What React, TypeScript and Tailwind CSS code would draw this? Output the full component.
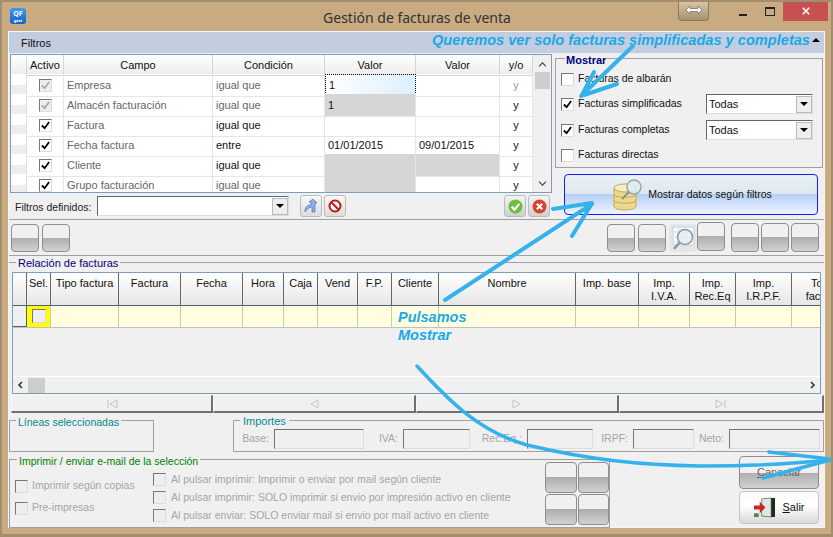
import type { ReactNode } from "react";

const filterRows = [
  { campo: "Empresa", cond: "igual que", v1: "1", v2: "", locked: true, focus: true },
  { campo: "Almacén facturación", cond: "igual que", v1: "1", v2: "", locked: true, grey1: true },
  { campo: "Factura", cond: "igual que", v1: "", v2: "" },
  { campo: "Fecha factura", cond: "entre", v1: "01/01/2015", v2: "09/01/2015" },
  { campo: "Cliente", cond: "igual que", v1: "", v2: "", grey1: true, grey2: true },
  { campo: "Grupo facturación", cond: "igual que", v1: "", v2: "", grey1: true, soft: true },
];

const relCols = [
  { w: "w-[24px]", t: "Sel." },
  { w: "w-[68px]", t: "Tipo factura" },
  { w: "w-[62px]", t: "Factura" },
  { w: "w-[62px]", t: "Fecha" },
  { w: "w-[41px]", t: "Hora" },
  { w: "w-[34px]", t: "Caja" },
  { w: "w-[40px]", t: "Vend" },
  { w: "w-[34px]", t: "F.P." },
  { w: "w-[47px]", t: "Cliente" },
  { w: "w-[137px]", t: "Nombre" },
  { w: "w-[63px]", t: "Imp. base" },
  { w: "w-[51px]", t: "Imp.\nI.V.A." },
  { w: "w-[46px]", t: "Imp.\nRec.Eq" },
  { w: "w-[56px]", t: "Imp.\nI.R.P.F." },
  { w: "w-[62px]", t: "Total\nfactura" },
];

function Check({ on, dim, className = "" }: { on?: boolean; dim?: boolean; className?: string }) {
  return (
    <span
      className={`flex h-[13px] w-[13px] shrink-0 items-center justify-center border border-t-[#777] border-l-[#777] border-r-[#ddd] border-b-[#ddd] ${dim ? "bg-[#eeeeee]" : "bg-white"} ${className}`}
    >
      {on && (
        <svg viewBox="0 0 10 10" className="h-[9px] w-[9px]">
          <path d="M1 5l3 3 5-7" fill="none" stroke={dim ? "#aaa" : "#000"} strokeWidth="2" />
        </svg>
      )}
    </span>
  );
}

function Glass({ className = "", children }: { className?: string; children?: ReactNode }) {
  return (
    <div
      className={`flex items-center justify-center rounded-[4px] border border-[#8e8e8e] bg-[linear-gradient(#f0f0f0_0%,#f0f0f0_50%,#aeaeae_50%,#d2d2d2_100%)] ${className}`}
    >
      {children}
    </div>
  );
}

function Combo({ className = "", text }: { className?: string; text?: string }) {
  return (
    <div className={`flex h-[20px] items-center border border-t-[#666] border-l-[#666] border-r-[#ddd] border-b-[#ddd] bg-white pl-[2px] ${className}`}>
      <span className="flex-1">{text}</span>
      <span className="flex h-[17px] w-[16px] items-center justify-center border border-[#bbb] bg-[#eeeeee]">
        <span className="h-0 w-0 border-x-[4px] border-t-[4px] border-x-transparent border-t-black" />
      </span>
    </div>
  );
}

function Field({ label }: { label: string }) {
  return (
    <>
      <span className="pr-[5px] text-right text-[#a5a5a5]">{label}</span>
      <span className="h-[20px] border border-t-[#777] border-l-[#777] border-r-[#ddd] border-b-[#ddd]" />
    </>
  );
}

function NavIcon({ d }: { d: string }) {
  return (
    <svg viewBox="0 0 12 10" className="h-[10px] w-[12px]">
      <path d={d} fill="none" stroke="#c4c4c4" />
    </svg>
  );
}

export default function App() {
  return (
    <div
      className="relative flex h-[537px] w-[833px] flex-col overflow-hidden border-2 border-b-[3px] border-[#a08e6e] bg-[#c8ab80] text-[11px] text-[#111]"
      style={{ fontFamily: '"Liberation Sans", sans-serif' }}
    >
      {/* title bar */}
      <div className="relative flex h-[29px] shrink-0 items-center justify-center pt-[2px] text-[14px] text-[#333]" style={{ fontFamily: '"Noto Sans", sans-serif' }}>
        <div className="absolute left-[8px] top-[6px] flex h-[16px] w-[16px] flex-col items-center justify-center rounded-[3px] bg-[linear-gradient(#3f9bf0,#1261c4)] text-[7px] font-bold leading-[9px] text-white">
          <span>QF</span>
          <span className="text-[4px] leading-[6px]">gest</span>
        </div>
        <span className="ml-[1px]">Gestión de facturas de venta</span>
        <div className="absolute right-[3px] top-[-2px] flex items-start">
          <div className="flex h-[21px] w-[31px] items-center justify-center rounded-b-[4px] border border-t-0 border-[#8b7a5c] bg-[linear-gradient(#dcc9a8,#a8936f)]">
            <svg viewBox="0 0 18 10" className="h-[10px] w-[18px]">
              <path d="M1 5l4-4v2.500h8V1l4 4-4 4V6.500H5V9z" fill="#fff" stroke="#555" strokeWidth="0.600" />
            </svg>
          </div>
          <div className="ml-[30px] mt-[14px] h-[2px] w-[8px] bg-[#222]" />
          <div className="ml-[18px] mt-[7px] h-[9px] w-[10px] border border-t-2 border-[#222]" />
          <div className="ml-[8px] mt-[1px] flex h-[20px] w-[45px] items-center justify-center bg-[#c75050]">
            <svg viewBox="0 0 10 10" className="h-[8px] w-[8px]">
              <path d="M1 1l8 8M9 1l-8 8" stroke="#fff" strokeWidth="2" />
            </svg>
          </div>
        </div>
      </div>

      {/* window body */}
      <div className="mx-[6px] flex h-[497px] w-[817px] shrink-0 flex-col border border-[#f6f6f6] bg-[#f0f0f0]">
        {/* Filtros */}
        <div className="flex h-[21px] shrink-0 items-center bg-[#c2cddf] pl-[12px] pt-[1px]">Filtros</div>
        <div className="flex h-[167px] shrink-0 border-b border-[#a0a0a0]">
          <div className="flex w-[544px] shrink-0 flex-col pl-[1px] pt-[1px]">
            <div className="flex h-[139px] w-[542px] shrink-0 overflow-hidden border border-[#7f9db9] bg-white">
              <div className="w-[522px] shrink-0">
                <div className="grid h-[19px] grid-cols-[16px_37px_149px_112px_91px_84px_33px] bg-[linear-gradient(#fff,#ededed)] text-center">
                  {["", "Activo", "Campo", "Condición", "Valor", "Valor", "y/o"].map((h, i) => (
                    <div key={i} className="border-b border-r border-[#d5d5d5] leading-[20px]">{h}</div>
                  ))}
                </div>
                {filterRows.map((r) => (
                  <div key={r.campo} className="grid h-[20px] grid-cols-[16px_37px_149px_112px_91px_84px_33px] leading-[22px]">
                    <div className="border-b border-r border-[#e0e0e0] bg-[linear-gradient(#fff,#fff_50%,#eeeeee_50%)]" />
                    <div className="flex items-center justify-center border-b border-r border-[#e6e6e6]">
                      <Check on dim={r.locked} />
                    </div>
                    <div className="border-b border-r border-[#e6e6e6] pl-[3px] text-[#666]">{r.campo}</div>
                    <div className={`border-b border-r border-[#e6e6e6] pl-[3px] ${r.locked || r.soft ? "text-[#666]" : ""}`}>{r.cond}</div>
                    <div
                      className={`pl-[3px] ${r.focus ? "border border-dotted border-black bg-[linear-gradient(90deg,#fff,#dcefff)] leading-[20px]" : "border-b border-r border-[#e6e6e6]"} ${r.grey1 ? "bg-[#d6d6d6]" : ""}`}
                    >
                      {r.v1}
                    </div>
                    <div className={`border-b border-r border-[#e6e6e6] pl-[3px] ${r.grey2 ? "bg-[#d6d6d6]" : ""}`}>{r.v2}</div>
                    <div className={`border-b border-r border-[#e6e6e6] text-center ${r.locked && r.focus ? "text-[#999]" : ""}`}>y</div>
                  </div>
                ))}
              </div>
              <div className="flex flex-1 flex-col items-center bg-[#f0f0f0]">
                <svg viewBox="0 0 10 6" className="mt-[7px] h-[5px] w-[9px]">
                  <path d="M1 5l4-4 4 4" fill="none" stroke="#555" strokeWidth="1.600" />
                </svg>
                <div className="mt-[5px] h-[17px] w-[15px] bg-[#cdcdcd]" />
                <svg viewBox="0 0 10 6" className="mb-[6px] mt-auto h-[5px] w-[9px]">
                  <path d="M1 1l4 4 4-4" fill="none" stroke="#555" strokeWidth="1.600" />
                </svg>
              </div>
            </div>
            <div className="flex flex-1 items-center">
              <span className="ml-[5px] w-[82px] shrink-0 pt-[3px] text-[10.5px] text-[#222]">Filtros definidos:</span>
              <Combo className="w-[192px]" />
              <div className="ml-[11px] flex h-[22px] w-[22px] items-center justify-center rounded-[3px] border border-[#bbb] bg-[linear-gradient(#f8f8f8,#ddd)]">
                <svg viewBox="0 0 16 16" className="h-[16px] w-[16px]">
                  <path d="M2 14c0-5 2-7 6-7V4l-2 0 4-3 4 4h-2v9H9V9c-3 0-5 2-7 5z" fill="#8fb0e8" stroke="#4a6fb8" strokeWidth="0.700" />
                </svg>
              </div>
              <div className="ml-[2px] flex h-[22px] w-[22px] items-center justify-center rounded-[3px] border border-[#bbb] bg-[linear-gradient(#f8f8f8,#ddd)]">
                <svg viewBox="0 0 14 14" className="h-[14px] w-[14px]">
                  <circle cx="7" cy="7" r="5.500" fill="#fff" stroke="#c41616" strokeWidth="2" />
                  <path d="M3 3l8 8" stroke="#c41616" strokeWidth="2" />
                </svg>
              </div>
              <div className="ml-[158px] flex h-[22px] w-[22px] items-center justify-center rounded-[3px] border border-[#bbb] bg-[linear-gradient(#f4f4f4,#cfcfcf)]">
                <svg viewBox="0 0 14 14" className="h-[15px] w-[15px]">
                  <circle cx="7" cy="7" r="6.500" fill="#6fbf3a" />
                  <path d="M3.500 7l2.500 3 4.500-5.500" fill="none" stroke="#fff" strokeWidth="2" />
                </svg>
              </div>
              <div className="ml-[2px] flex h-[22px] w-[22px] items-center justify-center rounded-[3px] border border-[#bbb] bg-[linear-gradient(#f4f4f4,#cfcfcf)]">
                <svg viewBox="0 0 14 14" className="h-[15px] w-[15px]">
                  <circle cx="7" cy="7" r="6.500" fill="#d9432f" />
                  <path d="M4.500 4.500l5 5M9.500 4.500l-5 5" stroke="#fff" strokeWidth="2" />
                </svg>
              </div>
            </div>
          </div>

          <div className="flex flex-1 flex-col">
            <fieldset className="ml-[2px] mt-[-1px] h-[116px] w-[268px] border border-[#a0a0a0] pl-[5px] text-[10.5px]">
              <legend className="ml-[4px] translate-y-[2px] px-[1px] text-[11px] font-bold leading-[12px] text-[#000080]">Mostrar</legend>
              <label className="mt-[3px] flex h-[24px] items-center gap-[4px]">
                <Check />
                <span>Facturas de albarán</span>
              </label>
              <div className="flex h-[26px] items-center gap-[4px]">
                <Check on />
                <span className="w-[124px]">Facturas simplificadas</span>
                <Combo className="w-[107px] text-[11px]" text="Todas" />
              </div>
              <div className="flex h-[26px] items-center gap-[4px]">
                <Check on />
                <span className="w-[124px]">Facturas completas</span>
                <Combo className="w-[107px] text-[11px]" text="Todas" />
              </div>
              <label className="flex h-[24px] items-center gap-[4px]">
                <Check />
                <span>Facturas directas</span>
              </label>
            </fieldset>
            <div className="ml-[11px] mt-[6px] flex h-[41px] w-[254px] items-center justify-center gap-[4px] rounded-[4px] border border-[#1a1aff] bg-[linear-gradient(#eaf1f4_0%,#dde9ee_48%,#b6cff5_50%,#eef4ff_100%)] pl-[2px] text-[10.5px]">
              <svg viewBox="0 0 32 34" className="h-[34px] w-[32px]">
                <path d="M2 10v18c0 3 7 4 11 4s11-1 11-4V10z" fill="#ecd98f" stroke="#c2a955" />
                <ellipse cx="13" cy="10" rx="11" ry="4" fill="#f8edc0" stroke="#c2a955" />
                <path d="M2 17c3 3 19 3 22 0M2 23c3 3 19 3 22 0" fill="none" stroke="#c2a955" />
                <circle cx="22" cy="9" r="7" fill="#dfeaf2" fillOpacity="0.850" stroke="#9aa7b0" strokeWidth="1.500" />
                <path d="M17 14l-7 7" stroke="#8a8f94" strokeWidth="2" />
              </svg>
              <span>Mostrar datos según filtros</span>
            </div>
          </div>
        </div>

        {/* toolbar */}
        <div className="flex h-[36px] shrink-0 items-center border-b border-[#a0a0a0] pl-[2px] pr-[5px]">
          <Glass className="h-[28px] w-[28px]" />
          <Glass className="ml-[3px] h-[28px] w-[28px]" />
          <Glass className="ml-auto h-[28px] w-[28px]" />
          <Glass className="ml-[3px] h-[28px] w-[28px]" />
          <div className="ml-[3px] flex h-[28px] w-[28px] items-center justify-center rounded-[3px] bg-[#e6e6e6]">
            <svg viewBox="0 0 28 28" className="h-[28px] w-[28px]">
              <path d="M4 3h21v18H4z" fill="#f8fafc" stroke="#c8d4e0" />
              <path d="M4 8h21M4 13h21M4 18h21M10 3v18M17 3v18" stroke="#d5dee6" />
              <circle cx="16" cy="13" r="7.500" fill="#e4eef6" fillOpacity="0.800" stroke="#8b98a2" strokeWidth="1.500" />
              <path d="M10.500 18.500L5 25" stroke="#8b98a2" strokeWidth="2.500" />
            </svg>
          </div>
          <Glass className="mb-[3px] h-[29px] w-[28px]" />
          <Glass className="ml-[6px] h-[29px] w-[28px]" />
          <Glass className="ml-[2px] h-[29px] w-[28px]" />
          <Glass className="ml-[2px] h-[29px] w-[28px]" />
        </div>

        {/* Relación de facturas */}
        <fieldset className="h-[157px] min-w-0 shrink-0 border-t border-[#a0a0a0] px-[3px]">
          <legend className="ml-[4px] translate-y-[1px] px-[2px] leading-[13px] text-[#000080]">Relación de facturas</legend>
          <div className="mt-[3px] flex h-[122px] flex-col overflow-hidden border border-[#7f9db9]">
            <div className="flex h-[33px] shrink-0 overflow-hidden border-b border-[#4f6470] bg-[linear-gradient(#fff,#e6e6e6)]">
              <div className="w-[14px] shrink-0 border-r border-[#666]" />
              {relCols.map((c) => (
                <div key={c.t} className={`${c.w} shrink-0 whitespace-pre border-r border-[#666] pt-[4px] text-center leading-[13px]`}>
                  {c.t}
                </div>
              ))}
            </div>
            <div className="flex h-[22px] shrink-0 overflow-hidden border-b border-[#c0c0c0] bg-[#ffffe0]">
              <div className="w-[14px] shrink-0 border-b border-r border-[#4f6470] bg-[#f0f0f0]" />
              {relCols.map((c, i) => (
                <div
                  key={c.t}
                  className={`${c.w} flex shrink-0 items-center justify-center border-r border-[#c8c8b8] ${i === 0 ? "bg-[#ffff00]" : ""}`}
                >
                  {i === 0 && <Check dim className="mb-[2px] h-[14px] w-[14px]" />}
                </div>
              ))}
            </div>
            <div className="flex-1 border-b border-white" />
            <div className="flex h-[16px] shrink-0 items-center px-[4px]">
              <svg viewBox="0 0 6 8" className="h-[8px] w-[6px]">
                <path d="M5 1L2 4l3 3" fill="none" stroke="#333" strokeWidth="1.600" />
              </svg>
              <div className="ml-[5px] h-[15px] w-[17px] bg-[#cdcdcd]" />
              <svg viewBox="0 0 6 8" className="ml-auto h-[8px] w-[6px]">
                <path d="M1 1l3 3-3 3" fill="none" stroke="#333" strokeWidth="1.600" />
              </svg>
            </div>
          </div>
          <div className="-mx-[1px] mt-[1px] grid h-[18px] grid-cols-[202px_203px_203px_205px]">
            {["M2 1v8M11 1L4 5l7 4V1z", "M10 1L3 5l7 4z", "M2 1l7 4-7 4z", "M10 1v8M1 1l7 4-7 4V1z"].map((d) => (
              <div key={d} className="flex items-center justify-center border border-b-2 border-r-2 border-[#f8f8f8] border-b-[#707070] border-r-[#707070]">
                <NavIcon d={d} />
              </div>
            ))}
          </div>
        </fieldset>

        {/* Líneas / Importes */}
        <div className="mt-[1px] flex h-[38px] shrink-0 text-[10.5px]">
          <fieldset className="h-[38px] w-[145px] border border-[#a0a0a0]">
            <legend className="ml-[6px] translate-y-[2px] px-[2px] leading-[12px] text-[#008b8b]">Líneas seleccionadas</legend>
          </fieldset>
          <fieldset className="ml-[79px] min-w-0 flex-1 border border-[#a0a0a0] pl-[4px]">
            <legend className="ml-[2px] translate-y-[1px] px-[3px] text-[11px] leading-[12px] text-[#008b8b]">Importes</legend>
            <div className="grid grid-cols-[36px_90px_39px_67px_57px_66px_40px_61px_35px_91px] items-center whitespace-nowrap pt-[3px]">
              <Field label="Base:" />
              <Field label="IVA:" />
              <Field label="Rec.Eq.:" />
              <Field label="IRPF:" />
              <Field label="Neto:" />
            </div>
          </fieldset>
        </div>

        {/* Imprimir */}
        <div className="mt-[1px] flex flex-1 items-start">
          <fieldset className="flex h-[75px] w-[601px] shrink-0 border border-[#a0a0a0] pl-[5px] text-[10.5px] text-[#a5a5a5]">
            <legend className="ml-[2px] translate-y-[2px] px-[2px] text-[10.5px] leading-[12px] text-[#008000]">Imprimir / enviar e-mail de la selección</legend>
            <div className="flex w-[138px] shrink-0 flex-col gap-[8px] pt-[14px]">
              <div className="flex h-[14px] items-center gap-[4px]"><Check dim className="h-[12px] w-[12px]" />Imprimir según copias</div>
              <div className="flex h-[14px] items-center gap-[4px]"><Check dim className="h-[12px] w-[12px]" />Pre-impresas</div>
            </div>
            <div className="flex w-[392px] shrink-0 flex-col whitespace-nowrap pt-[5px] leading-[18px]">
              <div className="flex items-center gap-[5px]"><Check dim className="h-[12px] w-[12px]" />Al pulsar imprimir: Imprimir o enviar por mail según cliente</div>
              <div className="flex items-center gap-[5px]"><Check dim className="h-[12px] w-[12px]" />Al pulsar imprimir: SOLO imprimir si envio por impresión activo en cliente</div>
              <div className="flex items-center gap-[5px]"><Check dim className="h-[12px] w-[12px]" />Al pulsar enviar: SOLO enviar mail si envio por mail activo en cliente</div>
            </div>
            <div className="mt-[-3px] grid h-[63px] w-[64px] shrink-0 grid-cols-2 gap-[1px]">
              <Glass />
              <Glass />
              <Glass />
              <Glass />
            </div>
          </fieldset>
          <div className="ml-[129px] mt-[3px] flex w-[80px] flex-col gap-[2px]">
            <Glass className="h-[33px] text-[#666]">
              <span><span className="underline">C</span>ancelar</span>
            </Glass>
            <div className="flex h-[33px] items-center justify-center gap-[6px] rounded-[4px] border border-[#c4c4c4] bg-[linear-gradient(#fafafa,#fff_45%,#d8d8d8)]">
              <svg viewBox="0 0 24 22" className="h-[21px] w-[23px]">
                <path d="M9 2l10-1v20l-10-1z" fill="#dfe8e0" stroke="#333" strokeWidth="0.600" />
                <path d="M19 1h4v20h-4z" fill="#1e2a20" />
                <path d="M1 9h6V5l6 6-6 6v-4H1z" fill="#c8281e" />
                <path d="M1 17h5v4H1z" fill="#4f8a46" />
              </svg>
              <span><span className="underline">S</span>alir</span>
            </div>
          </div>
        </div>
      </div>

      {/* annotations drawn over the screenshot */}
      <div className="absolute left-[430px] top-[29px] whitespace-nowrap text-[14.6px] font-bold italic leading-[18px] text-[#1ba9e6]">
        Queremos ver solo facturas simplificadas y completas
      </div>
      <div className="absolute right-[11px] top-[36px] h-0 w-0 border-x-[4px] border-b-[4px] border-x-transparent border-b-black" />
      <div className="absolute left-[396px] top-[306px] text-[14.5px] font-bold italic leading-[18px] text-[#1ba9e6]">
        Pulsamos
        <br />
        Mostrar
      </div>
      <svg viewBox="0 0 833 537" className="pointer-events-none absolute left-[-2px] top-[-2px] h-[537px] w-[833px]">
        <g fill="none" stroke="#35b2ec" strokeLinecap="round" strokeLinejoin="round">
          <g strokeWidth="4">
            <path d="M633 46L581 96M617 84L584 95M594 72L582 95" />
            <path d="M445 300L592 204M553 209L592 203M572 236L591 205" />
          </g>
          <g strokeWidth="3.500">
            <path d="M417 366C450 402 480 432 527 445C590 460 640 465 700 466C750 466 790 464 830 460" />
            <path d="M769 452L830 459M763 478L830 460" />
          </g>
        </g>
      </svg>
    </div>
  );
}
